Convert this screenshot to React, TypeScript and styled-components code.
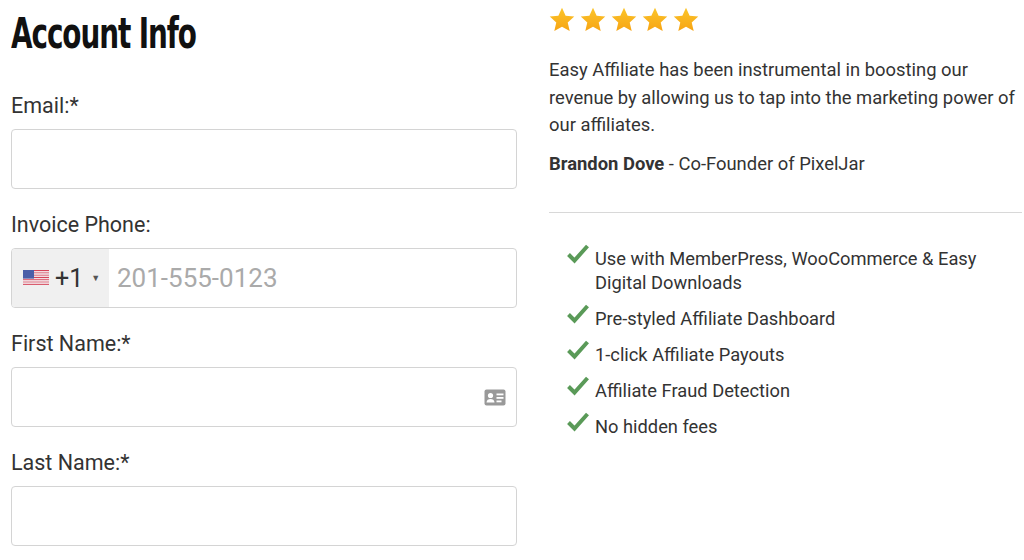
import React from "react";
import styled, { createGlobalStyle } from "styled-components";

const Global = createGlobalStyle`
  body { margin: 0; background: #fff; font-family: Roboto, "Liberation Sans", sans-serif; color: #333; }
`;

const Page = styled.div`
  display: grid;
  grid-template-columns: 506px 473px;
  column-gap: 32px;
  padding: 0 2px 0 11px;
  height: 560px;
  overflow: hidden;
`;

const Left = styled.div`display: flex; flex-direction: column;`;

const Title = styled.h1`
  margin: 10px 0 37px;
  font-family: "DejaVu Sans Condensed", "DejaVu Sans", sans-serif;
  font-weight: 700;
  font-size: 43px;
  line-height: 46px;
  letter-spacing: -1.5px;
  color: #111;
  transform: scaleX(0.72);
  transform-origin: left;
  white-space: nowrap;
`;

const Field = styled.div`display: flex; flex-direction: column; margin-bottom: 23px;`;

const Label = styled.label`
  font-size: 21.5px;
  line-height: 26px;
  color: #333;
  margin-bottom: 10px;
`;

const Box = styled.div`
  height: 58px;
  border: 1px solid #d4d4d4;
  border-radius: 4px;
  display: flex;
  align-items: center;
  overflow: hidden;
  background: #fff;
`;

const Flag = styled.div`
  width: 97px;
  height: 100%;
  background: #f0f0f0;
  display: flex;
  align-items: center;
  gap: 6px;
  padding-left: 11px;
  box-sizing: border-box;
  font-size: 25px;
  color: #333;
`;

const Caret = styled.span`font-size: 9px; color: #555; margin-left: 2px;`;

const Placeholder = styled.span`
  font-size: 26px;
  color: #aaa;
  padding-left: 8px;
`;

const CardIcon = styled.div`margin-left: auto; margin-right: 10px; display: flex;`;

const Right = styled.div`display: flex; flex-direction: column; padding-top: 6px;`;

const Stars = styled.div`display: flex; gap: 3px; margin-left: -1px;`;

const Quote = styled.p`
  margin: 22px 0 0;
  font-size: 18.4px;
  line-height: 27.5px;
  color: #333;
`;

const Author = styled.p`
  margin: 13px 0 0;
  font-size: 18.4px;
  line-height: 24px;
  b { font-weight: 700; }
`;

const Rule = styled.hr`
  border: none;
  border-top: 1px solid #d8d8d8;
  margin: 36px 0 34px;
`;

const List = styled.ul`list-style: none; margin: 0; padding: 0 0 0 18px; display: flex; flex-direction: column; gap: 12px;`;

const Item = styled.li`
  display: flex;
  gap: 6px;
  font-size: 18.3px;
  line-height: 24px;
  color: #333;
`;

const Star = () => (
  <svg width="28" height="28" viewBox="0 0 24 24">
    <defs>
      <linearGradient id="sg" x1="0" y1="0" x2="0" y2="1">
        <stop offset="0" stopColor="#fbc52a" />
        <stop offset="1" stopColor="#f7a414" />
      </linearGradient>
    </defs>
    <path d="M12 1.5l3.1 6.9 7.4.7-5.6 5 1.7 7.4L12 17.7l-6.6 3.8 1.7-7.4-5.6-5 7.4-.7z" fill="url(#sg)" />
  </svg>
);

const Check = () => (
  <svg width="22" height="20" viewBox="0 0 22 20" style={{ flexShrink: 0, marginTop: -3 }}>
    <path d="M1.5 10.5l6 6L20.5 2" fill="none" stroke="#5a9a58" strokeWidth="4" strokeLinejoin="miter" />
  </svg>
);

const USFlag = () => (
  <svg width="26" height="16" viewBox="0 0 26 16">
    {Array.from({ length: 7 }).map((_, i) => (
      <rect key={i} x="0" y={i * (16 / 7)} width="26" height={16 / 14} fill="#d6455a" />
    ))}
    {Array.from({ length: 6 }).map((_, i) => (
      <rect key={"w" + i} x="0" y={(i * 2 + 1) * (16 / 14)} width="26" height={16 / 14} fill="#f3dde0" />
    ))}
    <rect x="0" y="0" width="11" height="8.6" fill="#4a5ea8" />
  </svg>
);

const IdCard = () => (
  <svg width="22" height="17" viewBox="0 0 22 17">
    <rect x="0.5" y="0.5" width="21" height="16" rx="2" fill="#999" />
    <circle cx="6.5" cy="6.5" r="2.6" fill="#fff" />
    <path d="M2.5 13.5c0-2.5 2-3.6 4-3.6s4 1.1 4 3.6z" fill="#fff" />
    <rect x="12.5" y="4.5" width="7" height="1.8" fill="#fff" />
    <rect x="12.5" y="8" width="7" height="1.8" fill="#fff" />
    <rect x="12.5" y="11.5" width="5" height="1.8" fill="#fff" />
  </svg>
);

export default function App() {
  return (
    <>
      <Global />
      <Page>
        <Left>
          <Title>Account Info</Title>
          <Field>
            <Label>Email:*</Label>
            <Box />
          </Field>
          <Field>
            <Label>Invoice Phone:</Label>
            <Box>
              <Flag>
                <USFlag />
                <span>+1</span>
                <Caret>▼</Caret>
              </Flag>
              <Placeholder>201-555-0123</Placeholder>
            </Box>
          </Field>
          <Field>
            <Label>First Name:*</Label>
            <Box>
              <CardIcon><IdCard /></CardIcon>
            </Box>
          </Field>
          <Field>
            <Label>Last Name:*</Label>
            <Box />
          </Field>
        </Left>
        <Right>
          <Stars>{[0, 1, 2, 3, 4].map((i) => <Star key={i} />)}</Stars>
          <Quote>
            Easy Affiliate has been instrumental in boosting our revenue by allowing us to tap into the marketing power of our affiliates.
          </Quote>
          <Author><b>Brandon Dove</b> - Co-Founder of PixelJar</Author>
          <Rule />
          <List>
            {[
              "Use with MemberPress, WooCommerce & Easy Digital Downloads",
              "Pre-styled Affiliate Dashboard",
              "1-click Affiliate Payouts",
              "Affiliate Fraud Detection",
              "No hidden fees",
            ].map((t) => (
              <Item key={t}><Check /><span>{t}</span></Item>
            ))}
          </List>
        </Right>
      </Page>
    </>
  );
}
